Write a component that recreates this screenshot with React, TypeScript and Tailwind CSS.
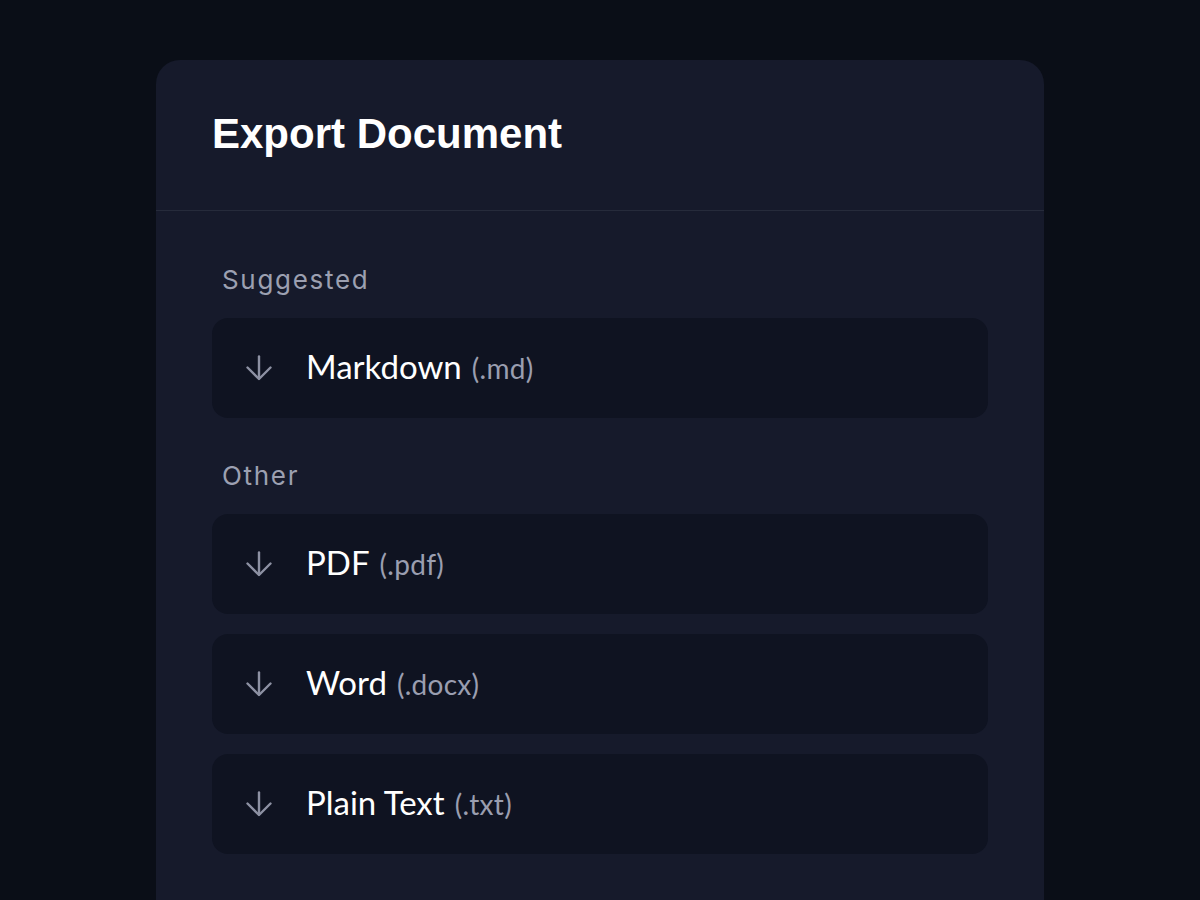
const sections = [
  { label: "Suggested", items: [{ name: "Markdown", ext: "(.md)" }] },
  {
    label: "Other",
    items: [
      { name: "PDF", ext: "(.pdf)" },
      { name: "Word", ext: "(.docx)" },
      { name: "Plain Text", ext: "(.txt)" },
    ],
  },
];

const DownArrow = () => (
  <svg width="28" height="26" viewBox="0 0 28 26" fill="none" className="shrink-0">
    <path d="M14 1.5v22" stroke="#8d91a3" strokeWidth="2.4" strokeLinecap="round" />
    <path d="M2.5 12.5 14 24 25.5 12.5" stroke="#8d91a3" strokeWidth="2.4" strokeLinecap="round" strokeLinejoin="round" />
  </svg>
);

export default function App() {
  return (
    <div className="flex h-[900px] w-full justify-center overflow-hidden bg-[#0a0e17] pt-[60px]">
      <div className="flex h-[900px] w-[888px] flex-col rounded-[24px] bg-[#161a2b]">
        <div className="border-b border-[#262b3b] px-14 pt-[53px] pb-[55px]">
          <h1 className="font-['Liberation_Sans',Arial,sans-serif] text-[42px] leading-[42px] font-bold text-white">
            Export Document
          </h1>
        </div>
        <div className="flex flex-col gap-[42px] px-14 pt-[53px]">
          {sections.map((s) => (
            <div key={s.label} className="flex flex-col">
              <div className="mb-[22px] pl-[10px] font-['Inter',sans-serif] text-[26px] leading-8 tracking-[0.065em] text-[#9ca0b1]">
                {s.label}
              </div>
              <div className="flex flex-col gap-5">
                {s.items.map((it) => (
                  <button
                    key={it.name}
                    className="flex h-[100px] w-full items-center gap-[33px] rounded-2xl bg-[#0f1321] pl-[33px] text-left"
                  >
                    <DownArrow />
                    <span className="-mt-[4px] font-['Lato',sans-serif] text-[33px] leading-none text-white">
                      {it.name}
                      <span className="ml-[10px] text-[28px] tracking-[0.01em] text-[#9a9eb0]">{it.ext}</span>
                    </span>
                  </button>
                ))}
              </div>
            </div>
          ))}
        </div>
      </div>
    </div>
  );
}
